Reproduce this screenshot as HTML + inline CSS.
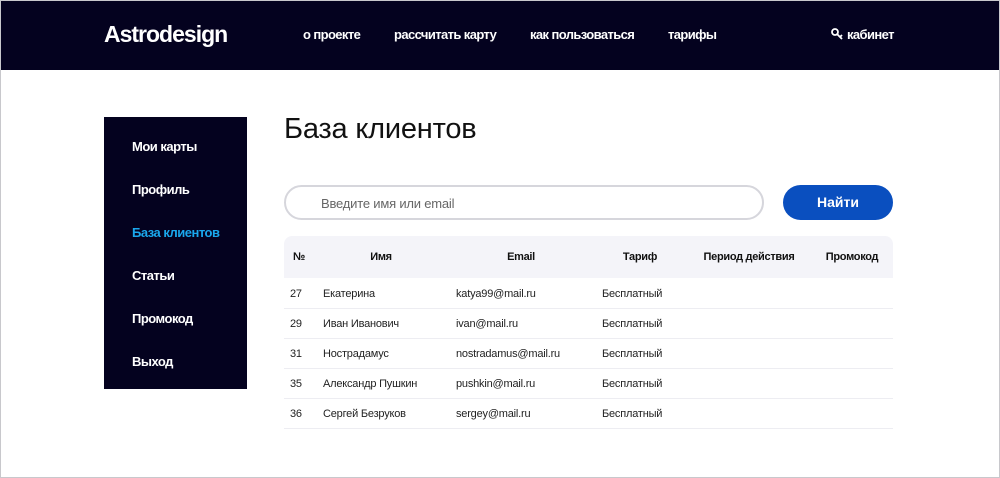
<!DOCTYPE html>
<html><head><meta charset="utf-8"><style>
*{margin:0;padding:0;box-sizing:border-box}
body{width:1000px;height:478px;background:#fff;font-family:"Liberation Sans",Arial,sans-serif;position:relative;overflow:hidden}
.frame{position:absolute;left:0;top:0;width:1000px;height:478px;border:1px solid #c8c8cc;pointer-events:none;z-index:5}
.hdr{position:absolute;left:0;top:0;width:1000px;height:70px;background:#04021f;color:#fff}
.logo{position:absolute;left:104px;top:21px;font-size:23px;font-weight:bold;letter-spacing:-1px}
.nav{position:absolute;top:27px;font-size:13px;font-weight:bold;letter-spacing:-0.6px}
.side{position:absolute;left:104px;top:117px;width:143px;height:272px;background:#04021f}
.side div{position:absolute;left:28px;color:#fff;font-size:13px;font-weight:bold;letter-spacing:-0.5px}
h1{position:absolute;left:284px;top:113px;font-size:29px;font-weight:normal;color:#111;letter-spacing:-0.2px}
.inp{position:absolute;left:284px;top:185px;width:480px;height:35px;border:2px solid #d6d6dc;border-radius:18px;font-size:13px;color:#666;padding:9px 0 0 35px;letter-spacing:-0.2px}
.btn{position:absolute;left:783px;top:185px;width:110px;height:35px;background:#0a4fbf;border-radius:18px;color:#fff;font-weight:bold;font-size:14px;text-align:center;line-height:35px}
.th{position:absolute;left:284px;top:236px;width:609px;height:42px;background:#f4f4f9;border-radius:8px 8px 0 0}
.th span{position:absolute;top:15px;font-size:11px;font-weight:bold;color:#111;transform:translateX(-50%);letter-spacing:-0.3px;white-space:nowrap}
.row{position:absolute;left:284px;width:609px;height:30px;border-bottom:1px solid #ededf2;font-size:11px;color:#222}
.row span{position:absolute;top:9px;letter-spacing:-0.2px}
</style></head><body>
<div class="frame"></div>
<div class="hdr">
<div class="logo">Astrodesign</div>
<div class="nav" style="left:303px">о проекте</div>
<div class="nav" style="left:394px">рассчитать карту</div>
<div class="nav" style="left:530px">как пользоваться</div>
<div class="nav" style="left:668px">тарифы</div>
<div class="nav" style="left:831px"><svg width="13" height="12" viewBox="0 0 13 12" style="vertical-align:-1px"><circle cx="4" cy="4" r="3" fill="none" stroke="#fff" stroke-width="1.8"/><path d="M6 6 L11 11 M9 9 L11 7" stroke="#fff" stroke-width="1.8" fill="none"/></svg> кабинет</div>
</div>
<div class="side">
<div style="top:22px">Мои карты</div>
<div style="top:65px">Профиль</div>
<div style="top:108px;color:#1aa7ec">База клиентов</div>
<div style="top:151px">Статьи</div>
<div style="top:194px">Промокод</div>
<div style="top:237px">Выход</div>
</div>
<h1>База клиентов</h1>
<div class="inp">Введите имя или email</div>
<div class="btn">Найти</div>
<div class="th">
<span style="left:15px">№</span><span style="left:97px">Имя</span><span style="left:237px">Email</span><span style="left:356px">Тариф</span><span style="left:465px">Период действия</span><span style="left:568px">Промокод</span>
</div>
<div class="row" style="top:279px"><span style="left:6px">27</span><span style="left:39px">Екатерина</span><span style="left:172px">katya99@mail.ru</span><span style="left:318px">Бесплатный</span></div>
<div class="row" style="top:309px"><span style="left:6px">29</span><span style="left:39px">Иван Иванович</span><span style="left:172px">ivan@mail.ru</span><span style="left:318px">Бесплатный</span></div>
<div class="row" style="top:339px"><span style="left:6px">31</span><span style="left:39px">Нострадамус</span><span style="left:172px">nostradamus@mail.ru</span><span style="left:318px">Бесплатный</span></div>
<div class="row" style="top:369px"><span style="left:6px">35</span><span style="left:39px">Александр Пушкин</span><span style="left:172px">pushkin@mail.ru</span><span style="left:318px">Бесплатный</span></div>
<div class="row" style="top:399px"><span style="left:6px">36</span><span style="left:39px">Сергей Безруков</span><span style="left:172px">sergey@mail.ru</span><span style="left:318px">Бесплатный</span></div>
</body></html>
